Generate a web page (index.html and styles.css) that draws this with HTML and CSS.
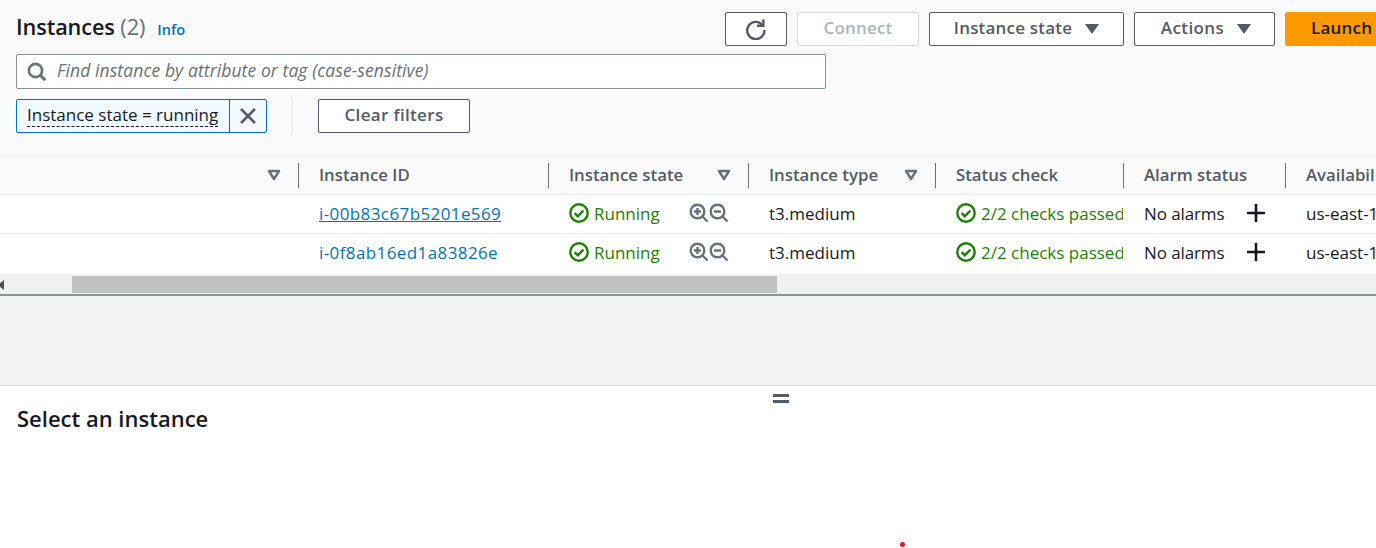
FILE: index.html
```html
<!DOCTYPE html>
<html lang="en">
<head>
<meta charset="utf-8">
<title>Instances</title>
<link rel="stylesheet" href="styles.css">
</head>
<body>
<svg class="defs" width="0" height="0" aria-hidden="true">
  <symbol id="caret" viewBox="0 0 14 12"><path d="M2 2h10L7 10z" fill="none" stroke="currentColor" stroke-width="2.4" stroke-linejoin="round"/></symbol>
  <symbol id="ok" viewBox="0 0 20 20"><circle cx="10" cy="10" r="8.7" fill="none" stroke="currentColor" stroke-width="2.4"/><path d="M5.6 10.2l3.2 3.2 5.6-5.8" fill="none" stroke="currentColor" stroke-width="2.4"/></symbol>
  <symbol id="zin" viewBox="0 0 20 20"><circle cx="8.5" cy="8.5" r="6.8" fill="none" stroke="currentColor" stroke-width="2.4"/><path d="M13.5 13.5l5 5M5 8.5h7M8.5 5v7" fill="none" stroke="currentColor" stroke-width="2.4"/></symbol>
  <symbol id="zout" viewBox="0 0 20 20"><circle cx="8.5" cy="8.5" r="6.8" fill="none" stroke="currentColor" stroke-width="2.4"/><path d="M13.5 13.5l5 5M5 8.5h7" fill="none" stroke="currentColor" stroke-width="2.4"/></symbol>
  <symbol id="plus" viewBox="0 0 20 20"><path d="M10 1v18M1 10h18" fill="none" stroke="currentColor" stroke-width="2.6"/></symbol>
</svg>
<div class="page">
  <section class="top">
    <div class="head-row">
      <div class="head-left">
        <h1 class="title">Instances <span class="count">(2)</span></h1>
        <a class="info">Info</a>
      </div>
      <div class="actions">
        <button class="btn btn-icon" aria-label="Refresh">
          <svg width="22" height="22" viewBox="0 0 22 22"><path d="M17.6 7.2A8.6 8.6 0 1 0 19.4 12" fill="none" stroke="currentColor" stroke-width="2.4"/><path d="M18.4 1.4v6.4H12" fill="none" stroke="currentColor" stroke-width="2.4"/></svg>
        </button>
        <button class="btn btn-connect" disabled>Connect</button>
        <button class="btn btn-state">Instance state<span class="tri"></span></button>
        <button class="btn btn-actions">Actions<span class="tri"></span></button>
        <button class="btn btn-launch">Launch instances</button>
      </div>
    </div>
    <div class="search">
      <svg width="20" height="20" viewBox="0 0 20 20"><circle cx="8.5" cy="8.5" r="6.6" fill="none" stroke="currentColor" stroke-width="2.6"/><path d="M13.3 13.3l5 5" fill="none" stroke="currentColor" stroke-width="3"/></svg>
      <span class="placeholder">Find instance by attribute or tag (case-sensitive)</span>
    </div>
    <div class="filter-row">
      <div class="token">
        <span class="token-text"><span class="token-label">Instance state = running</span></span>
        <span class="token-x"><svg width="16" height="16" viewBox="0 0 16 16"><path d="M1 1l14 14M15 1L1 15" fill="none" stroke="currentColor" stroke-width="2.6"/></svg></span>
      </div>
      <span class="vsep"></span>
      <button class="btn btn-clear">Clear filters</button>
    </div>
  </section>

  <section class="table">
    <div class="tr thead">
      <div class="th c0"><svg class="caret" width="14" height="12"><use href="#caret"/></svg></div>
      <div class="th c1">Instance ID</div>
      <div class="th c2">Instance state<svg class="caret" width="14" height="12"><use href="#caret"/></svg></div>
      <div class="th c3">Instance type<svg class="caret" width="14" height="12"><use href="#caret"/></svg></div>
      <div class="th c4">Status check</div>
      <div class="th c5">Alarm status</div>
      <div class="th c6">Availability Zone</div>
    </div>
    <div class="tr row">
      <div class="td c0"></div>
      <div class="td c1"><a class="link underlined">i-00b83c67b5201e569</a></div>
      <div class="td c2"><span class="good"><svg width="20" height="20"><use href="#ok"/></svg>Running</span><span class="zoom"><svg width="20" height="20"><use href="#zin"/></svg><svg width="20" height="20"><use href="#zout"/></svg></span></div>
      <div class="td c3">t3.medium</div>
      <div class="td c4"><span class="good"><svg width="20" height="20"><use href="#ok"/></svg>2/2 checks passed</span></div>
      <div class="td c5"><span class="alarm">No alarms</span><svg class="plus" width="20" height="20"><use href="#plus"/></svg></div>
      <div class="td c6">us-east-1a</div>
    </div>
    <div class="tr row">
      <div class="td c0"></div>
      <div class="td c1"><a class="link">i-0f8ab16ed1a83826e</a></div>
      <div class="td c2"><span class="good"><svg width="20" height="20"><use href="#ok"/></svg>Running</span><span class="zoom"><svg width="20" height="20"><use href="#zin"/></svg><svg width="20" height="20"><use href="#zout"/></svg></span></div>
      <div class="td c3">t3.medium</div>
      <div class="td c4"><span class="good"><svg width="20" height="20"><use href="#ok"/></svg>2/2 checks passed</span></div>
      <div class="td c5"><span class="alarm">No alarms</span><svg class="plus" width="20" height="20"><use href="#plus"/></svg></div>
      <div class="td c6">us-east-1a</div>
    </div>
  </section>

  <div class="scrollbar">
    <span class="arrow"></span>
    <span class="thumb"></span>
  </div>

  <div class="band"></div>

  <section class="detail">
    <div class="handle"></div>
    <h2 class="select">Select an instance</h2>
    <span class="dot"></span>
  </section>
</div>
</body>
</html>
```
FILE: styles.css
```css
* { box-sizing: border-box; }
html, body { margin: 0; padding: 0; height: 100%; overflow: hidden; }
body { font-family: "Open Sans", "Noto Sans", sans-serif; font-size: 17px; color: #16191f; background: #fff; }
.defs { position: absolute; }
.page { width: 1376px; height: 548px; overflow: hidden; display: flex; flex-direction: column; }

.top { height: 156px; background: #fafafa; padding: 12px 0 0 16px; flex: none; }
.head-row { display: flex; align-items: flex-start; height: 42px; }
.head-left { display: flex; align-items: flex-start; width: 709px; flex: none; }
.title { margin: 0; font-size: 21.7px; line-height: 30px; font-weight: 600; letter-spacing: -0.1px; color: #16191f; white-space: nowrap; }
.count { font-weight: 400; color: #687078; }
.info { margin: 8px 0 0 12px; font-size: 14.5px; line-height: 20px; font-weight: 600; color: #0073bb; }
.actions { display: flex; gap: 10px; flex: none; }
.btn { height: 34px; border: 1px solid #545b64; border-radius: 2px; background: #fff; color: #545b64; font: 600 17px/20px "Open Sans", "Noto Sans", sans-serif; letter-spacing: 0.2px; padding: 0 0 2px; display: flex; align-items: center; justify-content: center; white-space: nowrap; flex: none; }
.btn-icon { width: 62px; padding: 0; }
.btn-connect { width: 122px; border-color: #d5dbdb; color: #aab7b8; }
.btn-state { width: 195px; }
.btn-actions { width: 141px; padding-left: 3px; letter-spacing: 0.4px; }
.btn-launch { width: 180px; border-color: #ff9900; background: #ff9900; color: #16191f; justify-content: flex-start; padding-left: 25px; }
.tri { width: 0; height: 0; margin: 2px 0 0 13px; border-left: 7px solid transparent; border-right: 7px solid transparent; border-top: 10px solid #545b64; }

.search { width: 810px; height: 35px; border: 1px solid #879596; border-radius: 2px; background: #fff; display: flex; align-items: center; padding-left: 10px; color: #687078; }
.placeholder { margin-left: 10px; font-style: italic; font-size: 17.5px; letter-spacing: 0.1px; padding-bottom: 4px; }
.filter-row { display: flex; align-items: center; margin-top: 10px; height: 34px; }
.token { display: flex; width: 251px; height: 34px; border: 1px solid #0073bb; border-radius: 2px; background: #f1faff; }
.token-text { flex: 1; padding-left: 10px; line-height: 29px; font-size: 17px; white-space: nowrap; }
.token-label { border-bottom: 1px dashed #16191f; }
.token-x { width: 37px; border-left: 1px solid #0073bb; display: flex; align-items: center; justify-content: center; color: #545b64; }
.vsep { width: 1px; height: 34px; margin: 0 25px; background: #eaeded; }
.btn-clear { width: 152px; letter-spacing: 0.34px; }

.table { flex: none; border-top: 1px solid #eaeded; }
.tr { display: grid; grid-template-columns: 298px 250px 200px 187px 188px 162px 200px; }
.thead { height: 38px; background: #fafafa; border-bottom: 1px solid #eaeded; }
.row { height: 39px; background: #fff; border-bottom: 1px solid #eaeded; }
.row:last-child { border-bottom: 0; height: 40px; padding-bottom: 2px; }
.th { position: relative; display: flex; align-items: center; justify-content: space-between; padding: 0 17px 2px 21px; font-size: 16.8px; font-weight: 600; color: #545b64; white-space: nowrap; overflow: hidden; height: 37px; }
.th::before { content: ""; position: absolute; left: 0; top: 6px; height: 25px; width: 1px; background: #687078; }
.th.c0::before { display: none; }
.th.c0 { justify-content: flex-end; }
.th.c6 { justify-content: flex-start; }
.caret { color: #687078; flex: none; }
.td { display: flex; align-items: center; padding: 0 0 2px 21px; white-space: nowrap; overflow: hidden; color: #16191f; }
.td.c2 { justify-content: space-between; padding-right: 19px; }
.td.c5 { padding-right: 19px; justify-content: space-between; }
.alarm { letter-spacing: -0.1px; }
.link { color: #0073bb; letter-spacing: 0.4px; }
.underlined { text-decoration: underline; }
.good { display: inline-flex; align-items: center; gap: 5px; color: #1d8102; }
.zoom { display: inline-flex; color: #687078; }
.plus { color: #16191f; }

.scrollbar { flex: none; height: 22px; background: #f1f1f1; border-bottom: 2px solid #879596; display: flex; align-items: flex-start; position: relative; padding-left: 72px; padding-top: 2px; }
.arrow { position: absolute; left: -2px; top: 6px; width: 0; height: 0; border-top: 5px solid transparent; border-bottom: 5px solid transparent; border-right: 6px solid #505050; }
.thumb { width: 705px; height: 17px; background: #c1c1c1; }

.band { flex: none; height: 90px; background: #f2f3f3; border-bottom: 1px solid #d5dbdb; }
.detail { position: relative; flex: 1; background: #fff; padding: 17px 0 0 17px; }
.handle { position: absolute; left: 773px; top: 8px; width: 16px; height: 9px; border-top: 3px solid #545b64; border-bottom: 3px solid #545b64; }
.select { margin: 0; font-size: 22px; line-height: 30px; font-weight: 600; color: #16191f; }
.dot { position: absolute; left: 900px; top: 156px; width: 5px; height: 5px; border-radius: 50%; background: #e8171f; }
```
